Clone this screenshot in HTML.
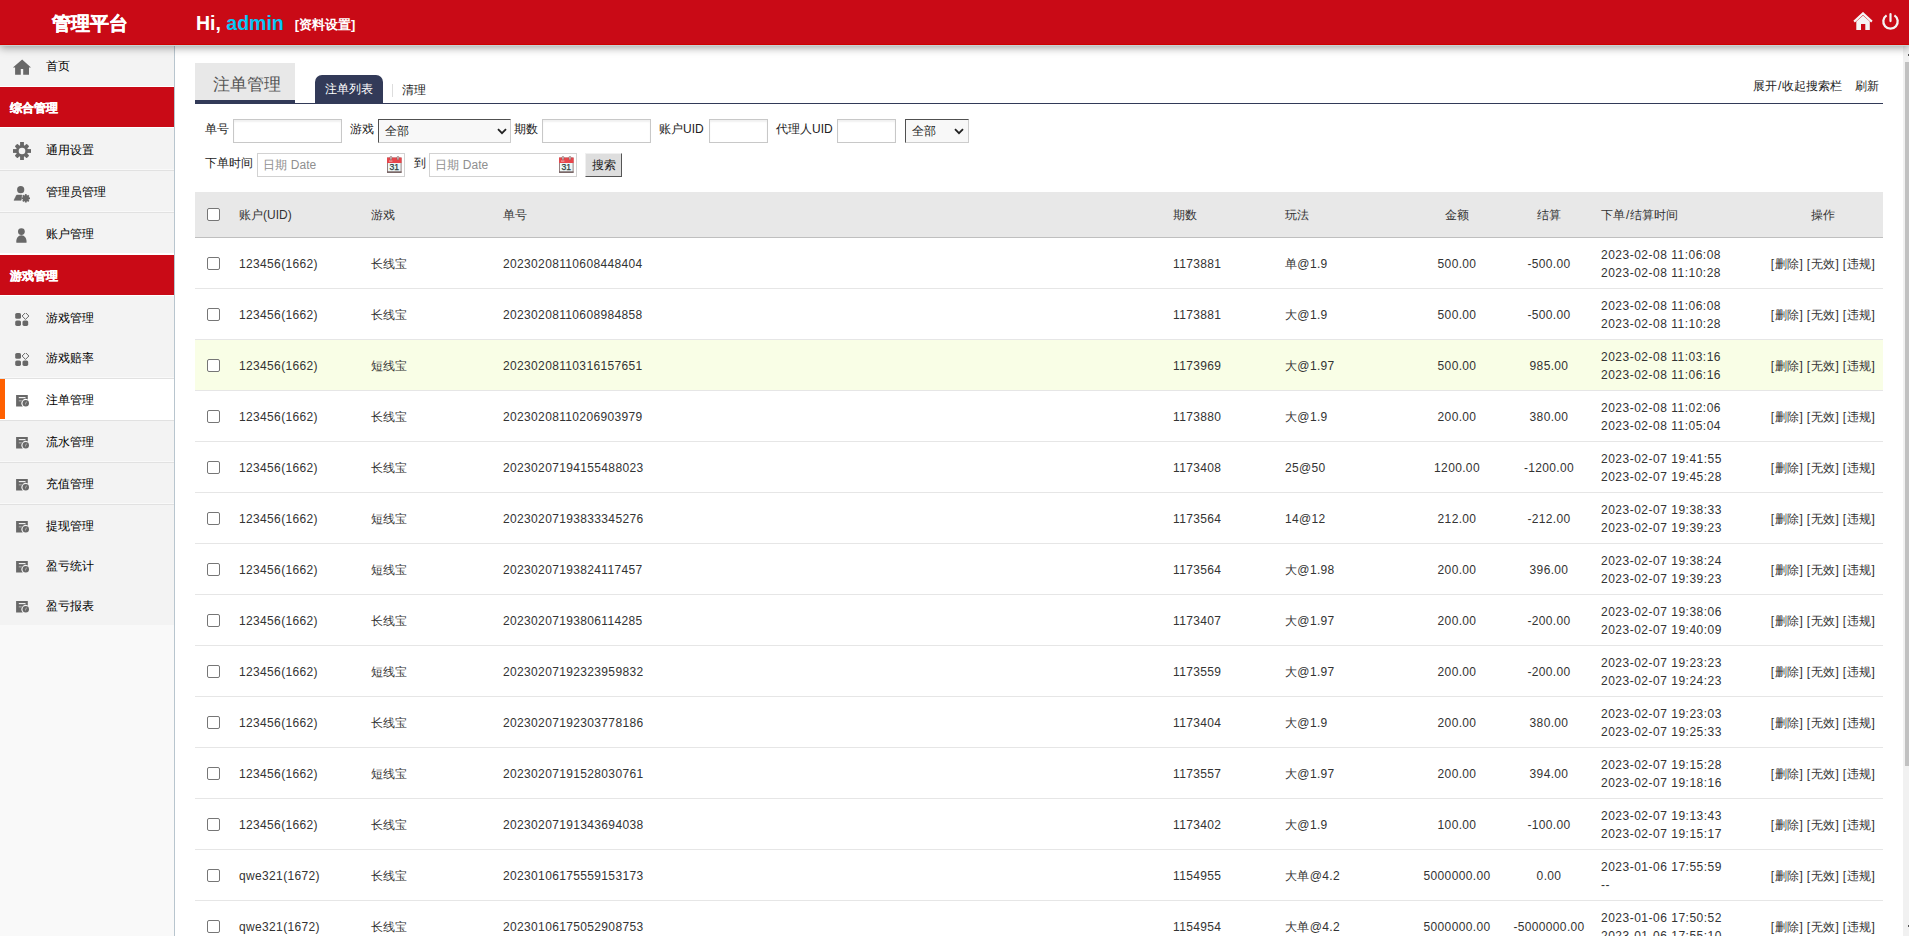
<!DOCTYPE html>
<html><head><meta charset="utf-8"><title>管理平台</title>
<style>
*{box-sizing:border-box}
html,body{margin:0;padding:0}
body{width:1909px;height:936px;overflow:hidden;position:relative;background:#fff;font-family:"Liberation Sans",sans-serif;font-size:12px;color:#333}
.abs{position:absolute}
#hd{position:absolute;left:0;top:0;width:1909px;height:45px;background:#c90a16;border-bottom:1px solid #cf0000;z-index:5;box-shadow:0 1px 0 #c7d4d4,0 3px 8px rgba(0,0,0,.36)}
#logo{position:absolute;left:52px;top:12px;font-size:18.5px;font-weight:bold;color:#fff;line-height:24px;letter-spacing:0;-webkit-text-stroke:0.45px #fff}
#hi{position:absolute;left:196px;top:11px;font-size:19.5px;font-weight:bold;color:#fff;line-height:24px;white-space:nowrap}
#hi b{color:#08c6f6}
#hi span{font-size:13px;margin-left:11px;position:relative;top:-1px}
#sb{position:absolute;left:0;top:45px;width:175px;height:891px;background:#f9f9f9;border-right:1px solid #b8c5ce}
.si{position:absolute;left:0;width:174px;background:#f3f3f3}
.si.act{background:#fff}
.ln{position:absolute;left:0;width:174px;height:1px}
.si.act:before{content:"";position:absolute;left:0;top:0;width:5px;height:100%;background:#ff6000}
.si .ic{position:absolute;line-height:0}
.si .ic svg{display:block}
.si .st{position:absolute;left:46px;line-height:12px;font-size:12px;color:#000;white-space:nowrap}
.sec{position:absolute;left:0;width:174px;height:40px;background:#c90a16;color:#fff;font-weight:bold;font-size:12px}
.sec div{position:absolute;left:10px;top:15px;line-height:12px;-webkit-text-stroke:0.35px #fff}
.wl{position:absolute;left:0;width:174px;background:#fff}
#ct{position:absolute;left:175px;top:45px;width:1734px;height:891px;background:#fff}
#tabbox{position:absolute;left:195px;top:63px;width:100px;height:37px;background:#e8e8e8;color:#555;font-size:16.5px}
#tabbox div{position:absolute;left:18px;top:13px;line-height:17px}
#tabbar{position:absolute;left:195px;top:100px;width:100px;height:4px;background:#323a58}
#navline{position:absolute;left:195px;top:103px;width:1688px;height:1px;background:#323a58}
#tab2{position:absolute;left:315px;top:75px;width:68px;height:29px;background:#323a58;border-radius:7px 7px 0 0;color:#fff}
#tab2 div{position:absolute;left:10px;top:8px;line-height:12px}
#sep{position:absolute;left:392px;top:84px;width:1px;height:13px;background:#ddd}
.t12{position:absolute;line-height:12px;font-size:12px;white-space:nowrap;color:#222}
.inp{position:absolute;height:24px;border:1px solid #c8c8c8;background:#fff;box-shadow:inset 0 2px 2px rgba(0,0,0,.06)}
.sel{position:absolute;height:24px;background:#f8f8f8;border:1px solid;border-color:#505050 #cdcdcd #cdcdcd #505050}
.sel span{position:absolute;left:6px;top:5px;line-height:12px;color:#222}
.sel svg{position:absolute;top:8px}
.dinp{position:absolute;height:24px;border:1px solid #d2d2d2;background:#fff}
.dinp span{position:absolute;left:5px;top:5px;line-height:12px;color:#8f8f8f;letter-spacing:.1px}
.dinp .cal{position:absolute;top:2px;line-height:0}
#btn{position:absolute;left:585px;top:153px;width:37px;height:24px;background:#dedede;border:1px solid;border-color:#f0f0f0 #555 #555 #f0f0f0;}
#btn span{position:absolute;left:6px;top:5px;line-height:12px;color:#222}
#tbl{position:absolute;left:195px;top:192px;width:1688px;border-collapse:collapse;table-layout:fixed}
#tbl th{height:45px;background:#e8e8e8;border-bottom:1px solid #bfbfbf;font-weight:normal;text-align:left;padding:2px 0 0 10px;color:#333;font-size:12px;line-height:12px}
#tbl td{height:51px;border-bottom:1px solid #e6e6e6;padding:2px 0 0 10px;color:#333;font-size:12px;line-height:18px;white-space:nowrap;vertical-align:middle}
#tbl tr.hl td{background:#f9fee6}
#tbl .c0{padding:0 0 0 2px;text-align:center}
#tbl .ctr{text-align:center;padding-left:0}
#tbl .num{letter-spacing:.35px}
#tbl .dt{padding-left:16px;padding-top:3px;letter-spacing:.5px}
#tbl .op{letter-spacing:.4px}
.cb{display:inline-block;width:13px;height:13px;border:1px solid #767676;border-radius:2px;background:#fff;vertical-align:middle}
#sctrack{position:absolute;left:1903px;top:45px;width:6px;height:891px;background:#f1f1f1}
#scthumb{position:absolute;left:1905px;top:62px;width:4px;height:704px;background:#c1c1c1}
</style></head><body>
<div id="hd">
<div id="logo">管理平台</div>
<div id="hi">Hi, <b>admin</b><span>[资料设置]</span></div>
<svg class="abs" style="left:1853px;top:12px" width="20" height="19" viewBox="0 0 20 19"><path d="M1.1 9.6L10 1.4L18.9 9.6" fill="none" stroke="#f6f6f6" stroke-width="2.2"/><path d="M3.3 9.6L10 3.6L16.8 9.6V17.9H12.3V12H8V17.9H3.3z" fill="#f4f4f4"/></svg>
<svg class="abs" style="left:1881px;top:11px" width="19" height="20" viewBox="0 0 19 20"><path d="M5.6 4.4A7.2 7.2 0 1 0 13.4 4.4" fill="none" stroke="#f4f4f4" stroke-width="2.3"/><path d="M9.5 3.1V10.1" stroke="#f4f4f4" stroke-width="2.2" stroke-linecap="round"/></svg>
</div>
<div id="sb">
</div>
<div class="si" style="top:45px;height:41px"></div>
<div class="si" style="top:45px;height:41px;"><div class="ic" style="left:12px;top:14px"><svg width="20" height="17" viewBox="0 0 20 17"><path d="M10.15 0.4L19 8.6H17V15.8H11.2V9.9H8.8V15.8H3.1V8.6H0.9z" fill="#686868"/></svg></div><div class="st" style="top:15px">首页</div></div><div class="si" style="top:128px;height:41px;"><div class="ic" style="left:13px;top:14px"><svg width="18" height="18" viewBox="-9 -9 18 18"><g fill="#686868"><rect x="-1.9" y="-9" width="3.8" height="18"/><rect x="-9" y="-1.9" width="18" height="3.8"/><rect x="-1.9" y="-8.4" width="3.8" height="16.8" transform="rotate(45)" rx="0.8"/><rect x="-1.9" y="-8.4" width="3.8" height="16.8" transform="rotate(-45)" rx="0.8"/><circle r="6"/></g><circle r="3.3" fill="#f3f3f3"/></svg></div><div class="st" style="top:16px">通用设置</div></div><div class="si" style="top:171px;height:40px;"><div class="ic" style="left:13px;top:13px"><svg width="18" height="20" viewBox="0 0 18 20"><circle cx="7.7" cy="5.7" r="3.6" fill="#686868"/><path d="M3.6 11.1H8.9L8.1 16.3H1z" fill="#686868" stroke="#686868" stroke-width="0.6" stroke-linejoin="round"/><g transform="translate(12.8 14.3)" fill="#686868"><circle r="3.1"/><rect x="-0.9" y="-4.2" width="1.8" height="8.4"/><rect x="-4.2" y="-0.9" width="8.4" height="1.8"/><rect x="-0.9" y="-4.2" width="1.8" height="8.4" transform="rotate(45)"/><rect x="-0.9" y="-4.2" width="1.8" height="8.4" transform="rotate(-45)"/></g></svg></div><div class="st" style="top:15px">管理员管理</div></div><div class="si" style="top:213px;height:40px;"><div class="ic" style="left:16px;top:15px"><svg width="12" height="15" viewBox="0 0 12 15"><circle cx="5.4" cy="3.6" r="3.4" fill="#686868"/><path d="M0.3 14.2C0.1 10.2 2.2 7.2 5.4 7.2S10.8 10.2 10.6 14.2Q10.5 14.7 10 14.7H0.9Q0.3 14.7 0.3 14.2z" fill="#686868"/></svg></div><div class="st" style="top:15px">账户管理</div></div><div class="si" style="top:296px;height:42px;"><div class="ic" style="left:15px;top:17px"><svg width="14" height="14" viewBox="0 0 14 14"><rect x="0.2" y="0" width="5.8" height="5.8" rx="1.6" fill="#686868"/><rect x="0.2" y="7.5" width="5.8" height="5.4" rx="1.6" fill="#686868"/><rect x="7.5" y="7.5" width="5.7" height="5.4" rx="1.6" fill="#686868"/><path d="M10.5 -0.4l3.4 3.4-3.4 3.4-3.4-3.4z" fill="none" stroke="#686868" stroke-width="1"/></svg></div><div class="st" style="top:16px">游戏管理</div></div><div class="si" style="top:338px;height:39px;"><div class="ic" style="left:15px;top:15px"><svg width="14" height="14" viewBox="0 0 14 14"><rect x="0.2" y="0" width="5.8" height="5.8" rx="1.6" fill="#686868"/><rect x="0.2" y="7.5" width="5.8" height="5.4" rx="1.6" fill="#686868"/><rect x="7.5" y="7.5" width="5.7" height="5.4" rx="1.6" fill="#686868"/><path d="M10.5 -0.4l3.4 3.4-3.4 3.4-3.4-3.4z" fill="none" stroke="#686868" stroke-width="1"/></svg></div><div class="st" style="top:14px">游戏赔率</div></div><div class="si act" style="top:379px;height:41px;"><div class="ic" style="left:16px;top:15px"><svg width="14" height="14" viewBox="0 0 14 14"><path d="M0.1 0.9H11.8V5.51A4.3 4.3 0 0 0 6.78 12.4H0.1z" fill="#686868"/><rect x="2.8" y="3.1" width="6.7" height="1.05" fill="#fff"/><rect x="2.8" y="6.3" width="2.95" height="1.05" fill="#b5b5b5"/><circle cx="9.76" cy="9.3" r="3.2" fill="#686868"/><path d="M10.9 7.1Q9.1 8.6 9.0 11.3Q10.5 9.7 10.9 7.1z" fill="#cfcfcf"/></svg></div><div class="st" style="top:15px">注单管理</div></div><div class="si" style="top:421px;height:40px;"><div class="ic" style="left:16px;top:15px"><svg width="14" height="14" viewBox="0 0 14 14"><path d="M0.1 0.9H11.8V5.51A4.3 4.3 0 0 0 6.78 12.4H0.1z" fill="#686868"/><rect x="2.8" y="3.1" width="6.7" height="1.05" fill="#fff"/><rect x="2.8" y="6.3" width="2.95" height="1.05" fill="#b5b5b5"/><circle cx="9.76" cy="9.3" r="3.2" fill="#686868"/><path d="M10.9 7.1Q9.1 8.6 9.0 11.3Q10.5 9.7 10.9 7.1z" fill="#cfcfcf"/></svg></div><div class="st" style="top:15px">流水管理</div></div><div class="si" style="top:463px;height:40px;"><div class="ic" style="left:16px;top:15px"><svg width="14" height="14" viewBox="0 0 14 14"><path d="M0.1 0.9H11.8V5.51A4.3 4.3 0 0 0 6.78 12.4H0.1z" fill="#686868"/><rect x="2.8" y="3.1" width="6.7" height="1.05" fill="#fff"/><rect x="2.8" y="6.3" width="2.95" height="1.05" fill="#b5b5b5"/><circle cx="9.76" cy="9.3" r="3.2" fill="#686868"/><path d="M10.9 7.1Q9.1 8.6 9.0 11.3Q10.5 9.7 10.9 7.1z" fill="#cfcfcf"/></svg></div><div class="st" style="top:15px">充值管理</div></div><div class="si" style="top:505px;height:41px;"><div class="ic" style="left:16px;top:15px"><svg width="14" height="14" viewBox="0 0 14 14"><path d="M0.1 0.9H11.8V5.51A4.3 4.3 0 0 0 6.78 12.4H0.1z" fill="#686868"/><rect x="2.8" y="3.1" width="6.7" height="1.05" fill="#fff"/><rect x="2.8" y="6.3" width="2.95" height="1.05" fill="#b5b5b5"/><circle cx="9.76" cy="9.3" r="3.2" fill="#686868"/><path d="M10.9 7.1Q9.1 8.6 9.0 11.3Q10.5 9.7 10.9 7.1z" fill="#cfcfcf"/></svg></div><div class="st" style="top:15px">提现管理</div></div><div class="si" style="top:546px;height:40px;"><div class="ic" style="left:16px;top:14px"><svg width="14" height="14" viewBox="0 0 14 14"><path d="M0.1 0.9H11.8V5.51A4.3 4.3 0 0 0 6.78 12.4H0.1z" fill="#686868"/><rect x="2.8" y="3.1" width="6.7" height="1.05" fill="#fff"/><rect x="2.8" y="6.3" width="2.95" height="1.05" fill="#b5b5b5"/><circle cx="9.76" cy="9.3" r="3.2" fill="#686868"/><path d="M10.9 7.1Q9.1 8.6 9.0 11.3Q10.5 9.7 10.9 7.1z" fill="#cfcfcf"/></svg></div><div class="st" style="top:14px">盈亏统计</div></div><div class="si" style="top:586px;height:39px;"><div class="ic" style="left:16px;top:14px"><svg width="14" height="14" viewBox="0 0 14 14"><path d="M0.1 0.9H11.8V5.51A4.3 4.3 0 0 0 6.78 12.4H0.1z" fill="#686868"/><rect x="2.8" y="3.1" width="6.7" height="1.05" fill="#fff"/><rect x="2.8" y="6.3" width="2.95" height="1.05" fill="#b5b5b5"/><circle cx="9.76" cy="9.3" r="3.2" fill="#686868"/><path d="M10.9 7.1Q9.1 8.6 9.0 11.3Q10.5 9.7 10.9 7.1z" fill="#cfcfcf"/></svg></div><div class="st" style="top:14px">盈亏报表</div></div><div class="ln" style="top:169px;background:#f9f9f9"></div><div class="ln" style="top:170px;background:#e1e1e1"></div><div class="ln" style="top:211px;background:#f9f9f9"></div><div class="ln" style="top:212px;background:#e1e1e1"></div><div class="ln" style="top:377px;background:#f9f9f9"></div><div class="ln" style="top:378px;background:#e1e1e1"></div><div class="ln" style="top:419px;background:#fff"></div><div class="ln" style="top:420px;background:#e1e1e1"></div><div class="ln" style="top:461px;background:#f9f9f9"></div><div class="ln" style="top:462px;background:#e1e1e1"></div><div class="ln" style="top:503px;background:#f9f9f9"></div><div class="ln" style="top:504px;background:#e1e1e1"></div>
<div class="wl" style="top:86px;height:1px"></div>
<div class="sec" style="top:87px"><div>综合管理</div></div>
<div class="wl" style="top:127px;height:1px"></div>
<div class="wl" style="top:253px;height:2px"></div>
<div class="sec" style="top:255px"><div>游戏管理</div></div>
<div class="wl" style="top:295px;height:1px"></div>

<div id="tabbox"><div>注单管理</div></div>
<div id="navline"></div>
<div id="tabbar"></div>
<div id="tab2"><div>注单列表</div></div>
<div id="sep"></div>
<div class="t12" style="left:402px;top:84px">清理</div>
<div class="t12" style="left:1753px;top:80px">展开<span style="margin:0 1px">/</span>收起搜索栏</div>
<div class="t12" style="left:1855px;top:80px">刷新</div>

<div class="t12" style="left:205px;top:123px">单号</div>
<div class="inp" style="left:233px;top:119px;width:109px"></div>
<div class="t12" style="left:350px;top:123px">游戏</div>
<div class="sel" style="left:378px;top:119px;width:133px"><span>全部</span><svg style="left:118px" width="10" height="7" viewBox="0 0 10 7"><path d="M1 1.2L5 5.2L9 1.2" fill="none" stroke="#222" stroke-width="1.8"/></svg></div>
<div class="t12" style="left:514px;top:123px">期数</div>
<div class="inp" style="left:542px;top:119px;width:109px"></div>
<div class="t12" style="left:659px;top:123px">账户UID</div>
<div class="inp" style="left:709px;top:119px;width:59px"></div>
<div class="t12" style="left:776px;top:123px">代理人UID</div>
<div class="inp" style="left:837px;top:119px;width:59px"></div>
<div class="sel" style="left:905px;top:119px;width:64px"><span>全部</span><svg style="left:48px" width="10" height="7" viewBox="0 0 10 7"><path d="M1 1.2L5 5.2L9 1.2" fill="none" stroke="#222" stroke-width="1.8"/></svg></div>

<div class="t12" style="left:205px;top:157px">下单时间</div>
<div class="dinp" style="left:257px;top:153px;width:148px"><span>日期 Date</span><div class="cal" style="left:129px"><svg style="display:block" width="15" height="17" viewBox="0 0 15 17"><rect x="0.5" y="2" width="13.6" height="14.3" fill="#ecf7f7" stroke="#8c7676" stroke-width="0.9"/><rect x="0.05" y="15.4" width="14.5" height="1.4" fill="#6f5c5c"/><rect x="0.05" y="1.6" width="14.5" height="5.4" fill="#e8464b"/><rect x="2" y="4.6" width="3.4" height="0.9" fill="#f6c0c0"/><rect x="3.1" y="0.3" width="1.7" height="3.6" rx="0.85" fill="#d8d8d8" stroke="#7a5050" stroke-width="0.5"/><rect x="10.1" y="0.3" width="1.7" height="3.6" rx="0.85" fill="#d8d8d8" stroke="#7a5050" stroke-width="0.5"/><text x="7.2" y="14" font-size="8.6" text-anchor="middle" fill="#2e3e3c" stroke="#2e3e3c" stroke-width="0.25" font-family="Liberation Sans">31</text></svg></div></div>
<div class="t12" style="left:414px;top:157px">到</div>
<div class="dinp" style="left:429px;top:153px;width:148px"><span>日期 Date</span><div class="cal" style="left:129px"><svg style="display:block" width="15" height="17" viewBox="0 0 15 17"><rect x="0.5" y="2" width="13.6" height="14.3" fill="#ecf7f7" stroke="#8c7676" stroke-width="0.9"/><rect x="0.05" y="15.4" width="14.5" height="1.4" fill="#6f5c5c"/><rect x="0.05" y="1.6" width="14.5" height="5.4" fill="#e8464b"/><rect x="2" y="4.6" width="3.4" height="0.9" fill="#f6c0c0"/><rect x="3.1" y="0.3" width="1.7" height="3.6" rx="0.85" fill="#d8d8d8" stroke="#7a5050" stroke-width="0.5"/><rect x="10.1" y="0.3" width="1.7" height="3.6" rx="0.85" fill="#d8d8d8" stroke="#7a5050" stroke-width="0.5"/><text x="7.2" y="14" font-size="8.6" text-anchor="middle" fill="#2e3e3c" stroke="#2e3e3c" stroke-width="0.25" font-family="Liberation Sans">31</text></svg></div></div>
<div id="btn"><span>搜索</span></div>

<table id="tbl">
<colgroup><col style="width:34px"><col style="width:132px"><col style="width:132px"><col style="width:670px"><col style="width:112px"><col style="width:126px"><col style="width:112px"><col style="width:72px"><col style="width:178px"><col style="width:120px"></colgroup>
<thead><tr><th class="c0"><span class="cb"></span></th><th>账户(UID)</th><th>游戏</th><th>单号</th><th>期数</th><th>玩法</th><th class="ctr">金额</th><th class="ctr">结算</th><th style="padding-left:16px">下单<span style="margin:0 1px">/</span>结算时间</th><th class="ctr">操作</th></tr></thead>
<tbody>
<tr><td class="c0"><span class="cb"></span></td><td class="num">123456(1662)</td><td>长线宝</td><td class="num">20230208110608448404</td><td class="num">1173881</td><td class="num">单@1.9</td><td class="num ctr">500.00</td><td class="num ctr">-500.00</td><td class="num dt">2023-02-08 11:06:08<br>2023-02-08 11:10:28</td><td class="ctr op">[删除] [无效] [违规]</td></tr><tr><td class="c0"><span class="cb"></span></td><td class="num">123456(1662)</td><td>长线宝</td><td class="num">20230208110608984858</td><td class="num">1173881</td><td class="num">大@1.9</td><td class="num ctr">500.00</td><td class="num ctr">-500.00</td><td class="num dt">2023-02-08 11:06:08<br>2023-02-08 11:10:28</td><td class="ctr op">[删除] [无效] [违规]</td></tr><tr class="hl"><td class="c0"><span class="cb"></span></td><td class="num">123456(1662)</td><td>短线宝</td><td class="num">20230208110316157651</td><td class="num">1173969</td><td class="num">大@1.97</td><td class="num ctr">500.00</td><td class="num ctr">985.00</td><td class="num dt">2023-02-08 11:03:16<br>2023-02-08 11:06:16</td><td class="ctr op">[删除] [无效] [违规]</td></tr><tr><td class="c0"><span class="cb"></span></td><td class="num">123456(1662)</td><td>长线宝</td><td class="num">20230208110206903979</td><td class="num">1173880</td><td class="num">大@1.9</td><td class="num ctr">200.00</td><td class="num ctr">380.00</td><td class="num dt">2023-02-08 11:02:06<br>2023-02-08 11:05:04</td><td class="ctr op">[删除] [无效] [违规]</td></tr><tr><td class="c0"><span class="cb"></span></td><td class="num">123456(1662)</td><td>长线宝</td><td class="num">20230207194155488023</td><td class="num">1173408</td><td class="num">25@50</td><td class="num ctr">1200.00</td><td class="num ctr">-1200.00</td><td class="num dt">2023-02-07 19:41:55<br>2023-02-07 19:45:28</td><td class="ctr op">[删除] [无效] [违规]</td></tr><tr><td class="c0"><span class="cb"></span></td><td class="num">123456(1662)</td><td>短线宝</td><td class="num">20230207193833345276</td><td class="num">1173564</td><td class="num">14@12</td><td class="num ctr">212.00</td><td class="num ctr">-212.00</td><td class="num dt">2023-02-07 19:38:33<br>2023-02-07 19:39:23</td><td class="ctr op">[删除] [无效] [违规]</td></tr><tr><td class="c0"><span class="cb"></span></td><td class="num">123456(1662)</td><td>短线宝</td><td class="num">20230207193824117457</td><td class="num">1173564</td><td class="num">大@1.98</td><td class="num ctr">200.00</td><td class="num ctr">396.00</td><td class="num dt">2023-02-07 19:38:24<br>2023-02-07 19:39:23</td><td class="ctr op">[删除] [无效] [违规]</td></tr><tr><td class="c0"><span class="cb"></span></td><td class="num">123456(1662)</td><td>长线宝</td><td class="num">20230207193806114285</td><td class="num">1173407</td><td class="num">大@1.97</td><td class="num ctr">200.00</td><td class="num ctr">-200.00</td><td class="num dt">2023-02-07 19:38:06<br>2023-02-07 19:40:09</td><td class="ctr op">[删除] [无效] [违规]</td></tr><tr><td class="c0"><span class="cb"></span></td><td class="num">123456(1662)</td><td>短线宝</td><td class="num">20230207192323959832</td><td class="num">1173559</td><td class="num">大@1.97</td><td class="num ctr">200.00</td><td class="num ctr">-200.00</td><td class="num dt">2023-02-07 19:23:23<br>2023-02-07 19:24:23</td><td class="ctr op">[删除] [无效] [违规]</td></tr><tr><td class="c0"><span class="cb"></span></td><td class="num">123456(1662)</td><td>长线宝</td><td class="num">20230207192303778186</td><td class="num">1173404</td><td class="num">大@1.9</td><td class="num ctr">200.00</td><td class="num ctr">380.00</td><td class="num dt">2023-02-07 19:23:03<br>2023-02-07 19:25:33</td><td class="ctr op">[删除] [无效] [违规]</td></tr><tr><td class="c0"><span class="cb"></span></td><td class="num">123456(1662)</td><td>短线宝</td><td class="num">20230207191528030761</td><td class="num">1173557</td><td class="num">大@1.97</td><td class="num ctr">200.00</td><td class="num ctr">394.00</td><td class="num dt">2023-02-07 19:15:28<br>2023-02-07 19:18:16</td><td class="ctr op">[删除] [无效] [违规]</td></tr><tr><td class="c0"><span class="cb"></span></td><td class="num">123456(1662)</td><td>长线宝</td><td class="num">20230207191343694038</td><td class="num">1173402</td><td class="num">大@1.9</td><td class="num ctr">100.00</td><td class="num ctr">-100.00</td><td class="num dt">2023-02-07 19:13:43<br>2023-02-07 19:15:17</td><td class="ctr op">[删除] [无效] [违规]</td></tr><tr><td class="c0"><span class="cb"></span></td><td class="num">qwe321(1672)</td><td>长线宝</td><td class="num">20230106175559153173</td><td class="num">1154955</td><td class="num">大单@4.2</td><td class="num ctr">5000000.00</td><td class="num ctr">0.00</td><td class="num dt">2023-01-06 17:55:59<br>--</td><td class="ctr op">[删除] [无效] [违规]</td></tr><tr><td class="c0"><span class="cb"></span></td><td class="num">qwe321(1672)</td><td>长线宝</td><td class="num">20230106175052908753</td><td class="num">1154954</td><td class="num">大单@4.2</td><td class="num ctr">5000000.00</td><td class="num ctr">-5000000.00</td><td class="num dt">2023-01-06 17:50:52<br>2023-01-06 17:55:10</td><td class="ctr op">[删除] [无效] [违规]</td></tr>
</tbody></table>
<div id="sctrack"></div>
<div id="scthumb"></div>
<div class="abs" style="left:1908px;top:54px;width:1px;height:2px;background:#555"></div>
<div class="abs" style="left:1908px;top:925px;width:1px;height:2px;background:#555"></div>
</body></html>
